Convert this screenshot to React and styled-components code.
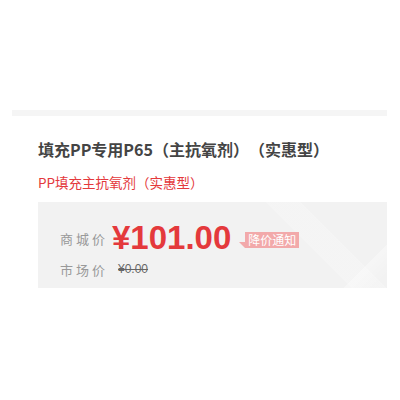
import React from "react";
import styled, { createGlobalStyle } from "styled-components";

const Global = createGlobalStyle`
  body {
    margin: 0;
    background: #fff;
    font-family: "Noto Sans CJK SC", "Liberation Sans", sans-serif;
    text-spacing-trim: space-all;
  }
`;

const Page = styled.div`
  width: 400px;
  height: 400px;
  padding: 110px 0 0 12px;
  box-sizing: border-box;
`;

const TopBar = styled.div`
  width: 375px;
  height: 6px;
  background: #f5f5f5;
`;

const Info = styled.div`
  margin-left: 26px;
  width: 349px;
  display: flex;
  flex-direction: column;
`;

const Title = styled.h1`
  margin: 21px 0 0;
  font-size: 16px;
  line-height: 24px;
  font-weight: 700;
  color: #444;
`;

const Subtitle = styled.div`
  margin-top: 11px;
  font-size: 13.5px;
  line-height: 20px;
  color: #e4393c;
`;

const PriceBox = styled.div`
  margin-top: 10px;
  height: 86px;
  box-sizing: border-box;
  padding: 16px 0 0 22px;
  background:
    linear-gradient(135deg, transparent 90%, rgba(255,255,255,0.35) 90%, transparent 97%),
    linear-gradient(45deg, transparent 72%, rgba(255,255,255,0.2) 72%, rgba(255,255,255,0.2) 80%, transparent 80%),
    #f2f2f2;
  display: flex;
  flex-direction: column;
`;

const Row = styled.div`
  display: flex;
  align-items: center;
  height: ${(p) => p.$h}px;
`;

const Label = styled.span`
  width: 52px;
  font-size: 13px;
  letter-spacing: 3px;
  color: #999;
  flex-shrink: 0;
`;

const Price = styled.span`
  font-family: "Liberation Sans", sans-serif;
  font-size: 33px;
  font-weight: 700;
  color: #e4393c;
  line-height: 40px;
`;

const Badge = styled.span`
  position: relative;
  margin-left: 14px;
  margin-top: 4px;
  padding: 0 3px;
  height: 16px;
  line-height: 16px;
  font-size: 12px;
  color: #fff;
  background: #f2a9aa;
  &::before {
    content: "";
    position: absolute;
    left: -6px;
    bottom: 0;
    border-style: solid;
    border-width: 0 6px 6px 0;
    border-color: transparent #f2a9aa transparent transparent;
  }
`;

const OldPrice = styled.span`
  margin-left: 6px;
  font-family: "Liberation Sans", sans-serif;
  font-size: 12px;
  color: #666;
  text-decoration: line-through;
`;

export default function App() {
  return (
    <Page>
      <Global />
      <TopBar />
      <Info>
        <Title>填充PP专用P65（主抗氧剂）（实惠型）</Title>
        <Subtitle>PP填充主抗氧剂（实惠型）</Subtitle>
        <PriceBox>
          <Row $h={40}>
            <Label>商城价</Label>
            <Price>¥101.00</Price>
            <Badge>降价通知</Badge>
          </Row>
          <Row $h={22}>
            <Label>市场价</Label>
            <OldPrice>¥0.00</OldPrice>
          </Row>
        </PriceBox>
      </Info>
    </Page>
  );
}
